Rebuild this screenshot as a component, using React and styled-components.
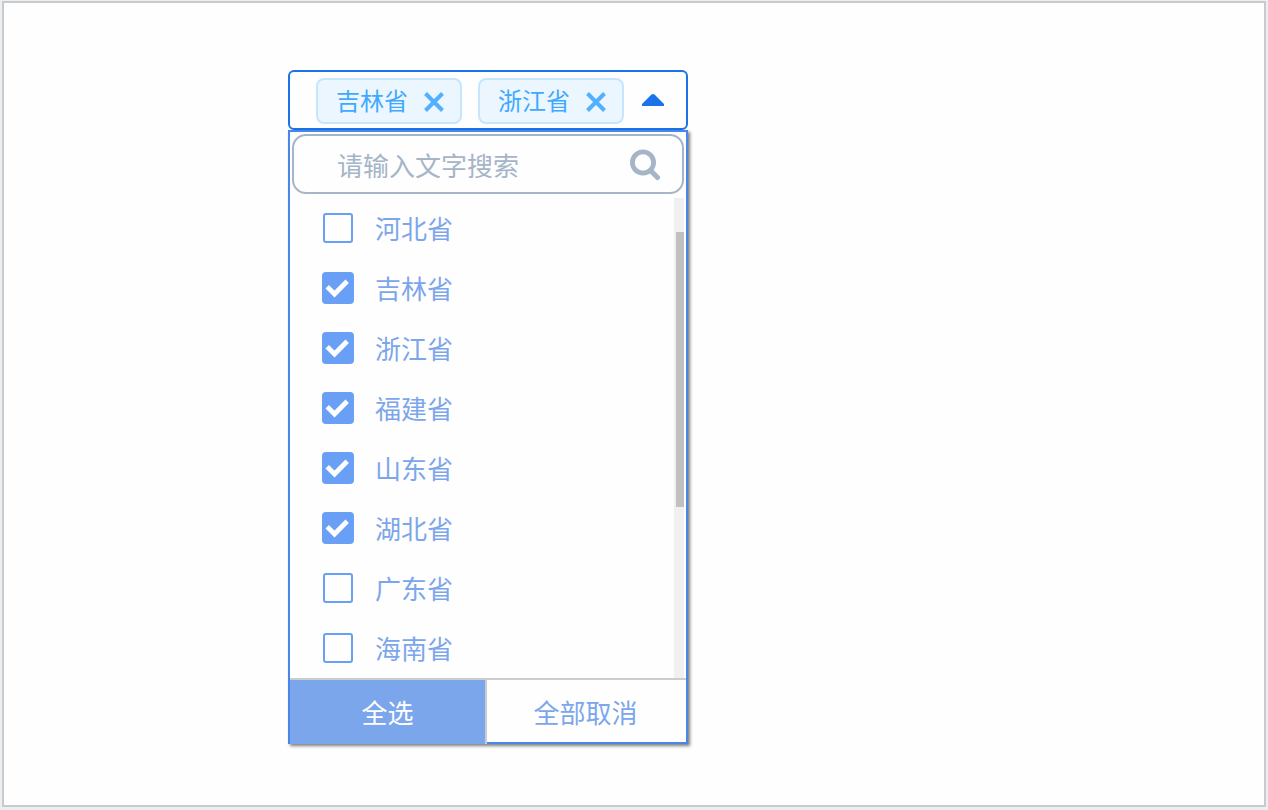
import React, { useState } from "react";
import styled, { createGlobalStyle } from "styled-components";

const GlobalStyle = createGlobalStyle`
  * { box-sizing: border-box; }
  body {
    margin: 0;
    background: #eceff1;
    font-family: "Noto Sans CJK SC", sans-serif;
  }
  #root { display: flow-root; }
  button, input { font-family: inherit; }
`;

const Frame = styled.main`
  margin: 1px 2px 3px;
  min-height: calc(100vh - 4px);
  padding: 67px 24px 61px 284px;
  border: 2px solid #c8cacb;
  background: #fefefe;
`;

const Picker = styled.div`
  width: 100%;
  max-width: 400px;
`;

const SelectBox = styled.div`
  display: flex;
  align-items: center;
  gap: 16px;
  height: 60px;
  padding: 2px 21px 0 26px;
  border: 2px solid #1a73e8;
  border-radius: 6px;
`;

const Tag = styled.span`
  display: flex;
  align-items: center;
  gap: 16px;
  height: 46px;
  padding: 0 16px 2px 18px;
  border: 2px solid #c6e5ff;
  border-radius: 8px;
  background: #ebf6ff;
  color: #40a9ff;
  font-size: 24px;
  line-height: 40px;
  white-space: nowrap;
`;

const IconButton = styled.button`
  display: flex;
  padding: 0;
  border: 0;
  background: none;
  color: inherit;
  cursor: pointer;
`;

const RemoveButton = styled(IconButton)`
  padding-top: 4px;
`;

const ToggleButton = styled(IconButton)`
  margin-left: auto;
  padding-bottom: 2px;
  color: #1a73e8;
`;

const Panel = styled.div`
  border: 2px solid #4a86e8;
  background: #fefefe;
  box-shadow: 2px 2px 3px rgba(0, 0, 0, 0.5);
`;

const SearchBox = styled.div`
  display: flex;
  align-items: center;
  height: 60px;
  margin: 2px 2px 4px;
  padding: 0 21px 0 43px;
  border: 2px solid #a5b5c7;
  border-radius: 14px;
  color: #a5b5c7;
`;

const SearchInput = styled.input`
  flex: 1;
  min-width: 0;
  height: 56px;
  padding: 0;
  border: 0;
  outline: 0;
  background: none;
  color: #7ca6eb;
  font-size: 26px;
  &::placeholder { color: #a5b5c7; opacity: 1; }
`;

const SearchButton = styled(IconButton)`
  padding-top: 2px;
`;

const ListArea = styled.div`
  display: flex;
  padding-right: 2px;
`;

const List = styled.ul`
  flex: 1;
  margin: 0;
  padding: 0 0 0 32px;
  list-style: none;
`;

const Option = styled.label`
  display: flex;
  align-items: center;
  gap: 21px;
  height: 60px;
  color: #7ca6eb;
  font-size: 26px;
  line-height: 60px;
  cursor: pointer;
`;

const CheckHolder = styled.span`
  position: relative;
  display: grid;
  place-items: center;
  width: 32px;
  height: 32px;
`;

const Checkbox = styled.input`
  appearance: none;
  width: 30px;
  height: 30px;
  margin: 0;
  border: 2px solid #699ff5;
  border-radius: 3px;
  background: #fefefe;
  &:checked {
    width: 32px;
    height: 32px;
    border-radius: 4px;
    background: #699ff5;
  }
`;

const CheckMark = styled.svg`
  position: absolute;
  inset: 0;
  pointer-events: none;
`;

const Track = styled.div`
  width: 10px;
  padding: 34px 0 0 2px;
  background: #f0f0f0;
`;

const Thumb = styled.div`
  height: 275px;
  background: #c0c0c0;
`;

const Footer = styled.div`
  display: grid;
  grid-template-columns: minmax(0, 99fr) minmax(0, 100fr);
  height: 64px;
  border-top: 2px solid #cccccc;
`;

const FooterButton = styled.button`
  padding: 0;
  border: 0;
  background: ${(p) => (p.$filled ? "#7ca6eb" : "transparent")};
  color: ${(p) => (p.$filled ? "#ffffff" : "#7ca6eb")};
  font-size: 26px;
  cursor: pointer;
  ${(p) => p.$filled
    ? "margin-bottom: -2px; padding-bottom: 2px; border-right: 2px solid #cccccc;"
    : "padding-right: 2px;"}
`;

const provinces = ["河北省", "吉林省", "浙江省", "福建省", "山东省", "湖北省", "广东省", "海南省"];

function CloseIcon() {
  return (
    <svg width="20" height="20" viewBox="0 0 20 20" aria-hidden="true">
      <path d="M1.5 1.5 18.5 18.5M18.5 1.5 1.5 18.5" stroke="currentColor" strokeWidth="4" fill="none" opacity="0.9" />
    </svg>
  );
}

function SearchIcon() {
  return (
    <svg width="32" height="32" viewBox="0 0 32 32" fill="none" stroke="currentColor" aria-hidden="true">
      <circle cx="14" cy="13.5" r="10.6" strokeWidth="4.8" />
      <path d="M21.5 21.5 28.5 28.5" strokeWidth="5" strokeLinecap="round" />
    </svg>
  );
}

export default function App() {
  const [selected, setSelected] = useState(provinces.slice(1, 6));
  const [query, setQuery] = useState("");
  const toggle = (name) =>
    setSelected((now) => (now.includes(name) ? now.filter((n) => n !== name) : [...now, name]));

  return (
    <>
      <GlobalStyle />
      <Frame>
        <Picker>
          <SelectBox>
            {selected.slice(0, 2).map((name) => (
              <Tag key={name}>
                {name}
                <RemoveButton type="button" aria-label={`移除${name}`} onClick={() => toggle(name)}>
                  <CloseIcon />
                </RemoveButton>
              </Tag>
            ))}
            <ToggleButton type="button" aria-label="收起">
              <svg width="24" height="12" viewBox="0 0 24 12" aria-hidden="true">
                <path d="M1 12V10L10 1Q12 -1 14 1L23 10V12Z" fill="currentColor" />
              </svg>
            </ToggleButton>
          </SelectBox>
          <Panel>
            <SearchBox>
              <SearchInput
                aria-label="搜索"
                placeholder="请输入文字搜索"
                value={query}
                onChange={(e) => setQuery(e.target.value)}
              />
              <SearchButton type="button" aria-label="搜索">
                <SearchIcon />
              </SearchButton>
            </SearchBox>
            <ListArea>
              <List>
                {provinces.filter((name) => name.includes(query)).map((name) => (
                  <li key={name}>
                    <Option>
                      <CheckHolder>
                        <Checkbox
                          type="checkbox"
                          checked={selected.includes(name)}
                          onChange={() => toggle(name)}
                        />
                        {selected.includes(name) && (
                          <CheckMark width="32" height="32" viewBox="0 0 32 32" aria-hidden="true">
                            <path d="M5.2 14.8 12.5 22 25.2 9.2" fill="none" stroke="#fff" strokeWidth="4.8" />
                          </CheckMark>
                        )}
                      </CheckHolder>
                      {name}
                    </Option>
                  </li>
                ))}
              </List>
              <Track>
                <Thumb />
              </Track>
            </ListArea>
            <Footer>
              <FooterButton type="button" $filled onClick={() => setSelected(provinces)}>全选</FooterButton>
              <FooterButton type="button" onClick={() => setSelected([])}>全部取消</FooterButton>
            </Footer>
          </Panel>
        </Picker>
      </Frame>
    </>
  );
}
